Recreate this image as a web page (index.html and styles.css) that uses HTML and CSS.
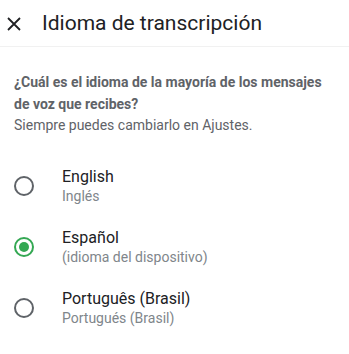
FILE: index.html
```html
<!DOCTYPE html>
<html lang="es">
<head>
<meta charset="utf-8">
<link rel="stylesheet" href="styles.css">
</head>
<body>
<div class="app">
  <header class="topbar">
    <svg class="close" width="24" height="24" viewBox="0 0 24 24"><path d="M6 6 L18 18 M18 6 L6 18" stroke="#202124" stroke-width="1.8" fill="none"/></svg>
    <h1 class="title">Idioma de transcripción</h1>
  </header>
  <main class="content">
    <p class="question">¿Cuál es el idioma de la mayoría de los mensajes de voz que recibes?</p>
    <p class="hint">Siempre puedes cambiarlo en Ajustes.</p>
    <ul class="options">
      <li class="option">
        <span class="radio"></span>
        <div class="labels"><div class="primary">English</div><div class="secondary">Inglés</div></div>
      </li>
      <li class="option">
        <span class="radio checked"></span>
        <div class="labels"><div class="primary">Español</div><div class="secondary">(idioma del dispositivo)</div></div>
      </li>
      <li class="option">
        <span class="radio"></span>
        <div class="labels"><div class="primary">Português (Brasil)</div><div class="secondary">Portugués (Brasil)</div></div>
      </li>
    </ul>
  </main>
</div>
</body>
</html>
```
FILE: styles.css
```css
* { box-sizing: border-box; }
html, body { margin: 0; padding: 0; background: #fff; }
body { font-family: Roboto, "Noto Sans", sans-serif; color: #202124; }
.app { width: 349px; }
.topbar {
  display: flex;
  align-items: center;
  height: 47px;
  padding: 0 0 0 2px;
  border-bottom: 1px solid #f1f1f1;
}
.close { display: block; flex: none; margin-top: 1px; }
.title {
  margin: 0 0 0 16px;
  font-size: 21px;
  font-weight: 400;
  color: #202124;
  line-height: 24px;
}
.content { padding: 0 14px; }
.question {
  margin: 24px 0 0;
  font-size: 14px;
  line-height: 22px;
  font-weight: 700;
  color: #5f6368;
}
.hint {
  margin: 0;
  font-size: 14px;
  line-height: 20px;
  color: #5f6368;
}
.options { list-style: none; margin: 20px 0 0; padding: 0; }
.option {
  display: flex;
  align-items: center;
  height: 61px;
}
.radio {
  flex: none;
  width: 20px;
  height: 20px;
  border: 2px solid #5f6368;
  border-radius: 50%;
  display: flex;
  align-items: center;
  justify-content: center;
}
.radio.checked { border-color: #34a853; }
.radio.checked::after {
  content: "";
  width: 10px;
  height: 10px;
  border-radius: 50%;
  background: #34a853;
}
.labels { margin-left: 28px; padding-top: 1px; }
.primary { font-size: 16px; line-height: 20px; color: #202124; }
.secondary { font-size: 14px; line-height: 19px; color: #80868b; }
```
